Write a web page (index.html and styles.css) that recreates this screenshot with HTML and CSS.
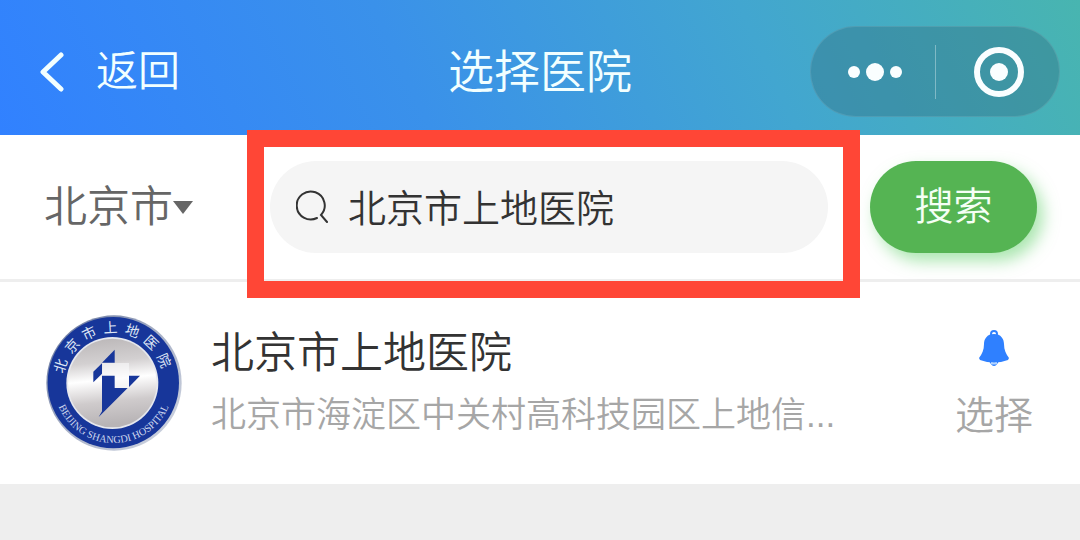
FILE: index.html
```html
<!DOCTYPE html>
<html lang="zh-CN">
<head>
    <meta charset="UTF-8">
    <meta name="viewport" content="width=device-width, initial-scale=1.0">
    <title>选择医院</title>
    <link rel="stylesheet" href="styles.css">
</head>
<body>
    <header class="header">
        <a class="back" href="#">
            <svg class="back-icon" viewBox="0 0 24 40" aria-hidden="true">
                <path d="M21 3 L3 20 L21 37" />
            </svg>
            返回
        </a>
        <h1 class="title">选择医院</h1>
        <div class="capsule">
            <button class="capsule-btn" type="button" aria-label="更多">
                <svg width="56" height="20" viewBox="0 0 56 20">
                    <circle cx="7" cy="10" r="6" />
                    <circle cx="28" cy="10" r="9" />
                    <circle cx="49" cy="10" r="6" />
                </svg>
            </button>
            <button class="capsule-btn" type="button" aria-label="关闭">
                <svg width="50" height="50" viewBox="0 0 50 50">
                    <circle class="ring" cx="25" cy="25" r="22" />
                    <circle cx="25" cy="25" r="9" />
                </svg>
            </button>
        </div>
    </header>

    <form class="search-bar">
        <div class="city">
            <select class="city-select" aria-label="城市">
                <option>北京市</option>
            </select>
            <svg class="city-arrow" viewBox="0 0 20 13" aria-hidden="true">
                <path d="M0 0 H20 L10 13 Z" />
            </svg>
        </div>
        <div class="search-box">
            <svg class="search-icon" viewBox="0 0 34 34" aria-hidden="true">
                <path d="M21 28 A14 14 0 1 1 25 25 L31 32" />
            </svg>
            <input class="search-input" type="text" value="北京市上地医院" aria-label="搜索医院">
        </div>
        <button class="search-btn" type="button">搜索</button>
    </form>

    <main class="hospital">
        <svg class="logo" viewBox="48 44 408 408" role="img" aria-label="北京市上地医院">
            <defs>
                <linearGradient id="rim" x1="0" y1="0" x2="1" y2="1">
                    <stop offset="0" stop-color="#5f6f98" />
                    <stop offset="0.5" stop-color="#a9b2c8" />
                    <stop offset="1" stop-color="#d5dae4" />
                </linearGradient>
                <linearGradient id="plate" x1="0" y1="0" x2="0.1" y2="1">
                    <stop offset="0" stop-color="#b9b5b6" />
                    <stop offset="0.3" stop-color="#d3d0d1" />
                    <stop offset="0.5" stop-color="#ffffff" />
                    <stop offset="0.75" stop-color="#cfcbcc" />
                    <stop offset="1" stop-color="#b8b4b6" />
                </linearGradient>
                <path id="arc" d="M71 248 A180 180 0 0 0 431 248" />
            </defs>
            <circle cx="252" cy="248" r="203" fill="url(#rim)" />
            <circle cx="250" cy="247" r="197" fill="#17369a" />
            <circle cx="247" cy="248" r="138" fill="#e6e8ee" />
            <circle cx="247" cy="248" r="133" fill="url(#plate)" />
            <path d="M217 188 H297 V263 H254 V226 H217 Z" fill="#fafafc" fill-opacity="0.6" />
            <g fill="#17369a">
                <path d="M254 148 V187 H216 Z" />
                <path d="M216 189 V220 L190 246 V214 Z" />
                <path d="M216 226 H254 V263 H293 L206 350 L216 333 Z" />
                <path d="M297 226 H330 L297 260 Z" />
            </g>
            <g class="logo-name">
                <text x="250" y="97" transform="rotate(-72 250 248)">北</text>
                <text x="250" y="97" transform="rotate(-48 250 248)">京</text>
                <text x="250" y="97" transform="rotate(-26 250 248)">市</text>
                <text x="250" y="97" transform="rotate(-3 250 248)">上</text>
                <text x="250" y="97" transform="rotate(20 250 248)">地</text>
                <text x="250" y="97" transform="rotate(43 250 248)">医</text>
                <text x="250" y="97" transform="rotate(66 250 248)">院</text>
            </g>
            <text class="logo-latin"><textPath href="#arc" startOffset="50%">BEIJING SHANGDI HOSPITAL</textPath></text>
        </svg>
        <div class="info">
            <h2 class="name">北京市上地医院</h2>
            <p class="address">北京市海淀区中关村高科技园区上地信...</p>
        </div>
        <div class="action">
            <svg class="bell" viewBox="0 0 30 36" aria-hidden="true">
                <circle class="bell-ring" cx="15" cy="4" r="3" />
                <path d="M15 4 C22 4 25 9 25 14 C25 20 27 24 30 28 L29 30 Q15 35 1 30 L0 28 C3 24 5 20 5 14 C5 9 8 4 15 4 Z" />
                <path d="M10 31 Q15 41 20 31 Z" />
                <path class="bell-shine" d="M12 33 Q15 34 18 33" />
            </svg>
            <a class="choose" href="#">选择</a>
        </div>
    </main>
</body>
</html>
```
FILE: styles.css
```css
* {
    margin: 0;
    padding: 0;
    box-sizing: border-box;
}

body {
    font-family: "Liberation Sans", "Noto Sans CJK SC", sans-serif;
    font-weight: 350;
    background-color: #eeeeee;
}

a {
    color: inherit;
    text-decoration: none;
}

button,
input,
select {
    font: inherit;
    border: none;
    outline: none;
}

.header {
    display: grid;
    grid-template-columns: 1fr auto 1fr;
    align-items: center;
    padding: 26px 20px 18px;
    background: linear-gradient(65deg, #3181ff 0%, #3a91ea 38%, #42a6d0 70%, #48b5b0 100%);
    color: #f2ffff;
}

.back {
    display: flex;
    align-items: center;
    gap: 32px;
    padding-left: 20px;
    font-size: 42px;
    line-height: 60px;
}

.back-icon {
    width: 24px;
    height: 40px;
    fill: none;
    stroke: #f2ffff;
    stroke-width: 5;
    stroke-linecap: round;
    stroke-linejoin: round;
}

.title {
    font-size: 46px;
    font-weight: 350;
    line-height: 60px;
}

.capsule {
    display: flex;
    justify-self: end;
    width: 250px;
    height: 91px;
    border: 1px solid rgba(255, 255, 255, 0.1);
    border-radius: 46px;
    background-color: rgba(50, 110, 130, 0.4);
    align-items: center;
}

.capsule-btn {
    display: flex;
    flex: 1;
    justify-content: center;
    align-items: center;
    height: 54px;
    padding-left: 4px;
    background: none;
    fill: #fafeff;
    cursor: pointer;
}

.capsule-btn + .capsule-btn {
    border-left: 1px solid rgba(255, 255, 255, 0.35);
}

.ring {
    fill: none;
    stroke: #fafeff;
    stroke-width: 6;
}

.search-bar {
    display: flex;
    align-items: center;
    padding: 26px 43px 26px 44px;
    border-bottom: 3px solid #eeeeee;
    background-color: white;
}

.city {
    display: flex;
    align-items: center;
    width: 226px;
}

.city-select {
    appearance: none;
    background: none;
    color: #666666;
    font-size: 43px;
    line-height: 60px;
}

.city-arrow {
    width: 20px;
    height: 13px;
    fill: #666666;
    pointer-events: none;
}

.search-box {
    position: relative;
    display: flex;
    flex: 1;
    align-items: center;
    gap: 18px;
    min-width: 0;
    height: 92px;
    margin-right: 42px;
    padding: 0 26px;
    border-radius: 46px;
    background-color: #f5f5f5;
}

/* red highlight around the search field */
.search-box::after {
    content: "";
    position: absolute;
    top: -31px;
    right: -32px;
    bottom: -45px;
    left: -23px;
    border: 17px solid #ff4636;
    pointer-events: none;
}

.search-icon {
    flex: none;
    width: 34px;
    height: 34px;
    fill: none;
    stroke: #333333;
    stroke-width: 2;
    stroke-linecap: round;
}

.search-input {
    flex: 1;
    min-width: 0;
    padding-top: 4px;
    background: none;
    color: #333333;
    font-size: 38px;
    line-height: 60px;
}

.search-btn {
    width: 167px;
    height: 92px;
    border-radius: 46px;
    background-color: #55b453;
    box-shadow: 6px 8px 16px rgba(85, 205, 95, 0.5);
    color: #f5fff5;
    font-size: 39px;
    line-height: 60px;
    cursor: pointer;
}

.hospital {
    display: flex;
    align-items: center;
    padding: 33px 47px 33px 46px;
    background-color: white;
}

.logo {
    flex: none;
    width: 136px;
    height: 136px;
}

.logo-name {
    font-size: 42px;
    font-weight: 400;
    fill: #dfe6f5;
    text-anchor: middle;
}

.logo-latin {
    font-family: "Liberation Serif", serif;
    font-size: 31px;
    font-weight: 400;
    fill: #cdd6ee;
    text-anchor: middle;
}

.info {
    flex: 1;
    min-width: 0;
    margin-left: 29px;
}

.name {
    color: #333333;
    font-size: 43px;
    font-weight: 350;
    line-height: 64px;
}

.address {
    color: #a6a6a6;
    font-size: 35px;
    line-height: 60px;
    white-space: nowrap;
}

.action {
    display: flex;
    flex-direction: column;
    align-items: center;
    gap: 20px;
    padding-top: 10px;
}

.bell {
    width: 30px;
    height: 36px;
    fill: #2f80ff;
}

.bell-ring,
.bell-shine {
    fill: none;
    stroke: #2f80ff;
    stroke-width: 2;
}

.bell-shine {
    stroke: #b5d5ff;
}

.choose {
    color: #a6a6a6;
    font-size: 39px;
    line-height: 60px;
}
```
